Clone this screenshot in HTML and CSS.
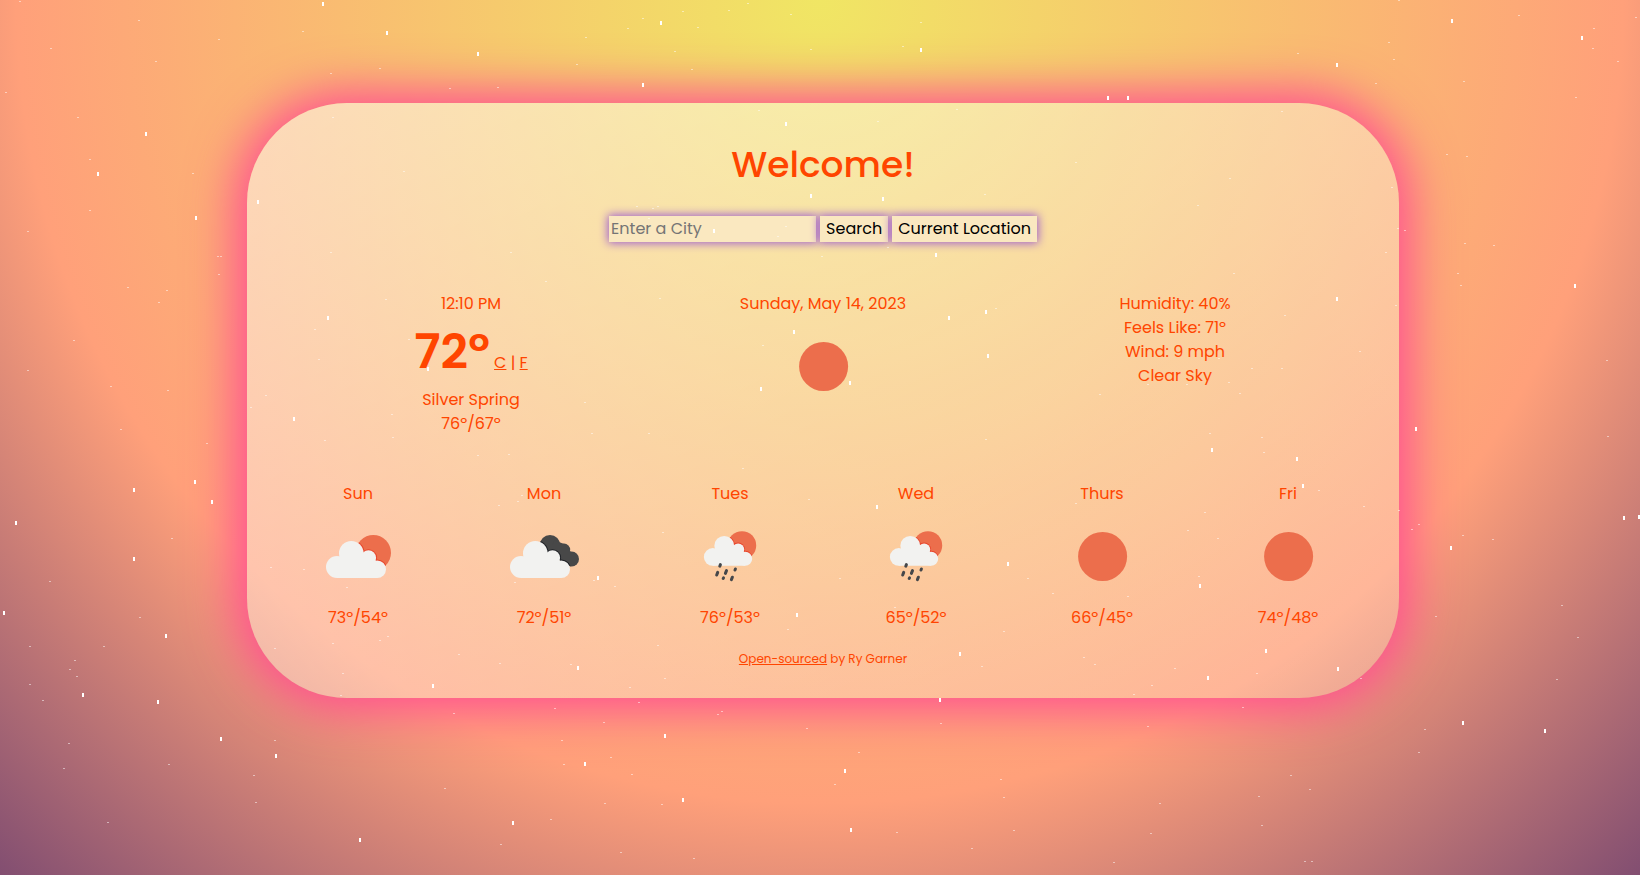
FILE: index.html
```
<!DOCTYPE html>
<html lang="en">
<head>
<meta charset="utf-8">
<meta name="viewport" content="width=device-width, initial-scale=1">
<title>Weather</title>
<link rel="stylesheet" href="styles.css">
</head>
<body>
<svg class="defs" aria-hidden="true">
  <defs>
    <g id="cloud">
      <circle cx="29" cy="61" r="11"/>
      <circle cx="43.3" cy="47.2" r="12.3"/>
      <circle cx="60.5" cy="51.8" r="7.6"/>
      <circle cx="69.2" cy="63.3" r="8.8"/>
      <path d="M29 72H69.2V56L60 48L44 46L29 52z"/>
    </g>
    <clipPath id="clip-sun"><circle cx="65.3" cy="46.7" r="17.7"/></clipPath>
    <g id="dark-shape">
      <circle cx="56" cy="39.3" r="10.3"/>
      <circle cx="70" cy="43.8" r="6.2"/>
      <circle cx="77.6" cy="53" r="7.4"/>
      <path d="M56 49L77 60.4L77 46L70 38L60 34z"/>
    </g>
    <clipPath id="clip-dark">
      <circle cx="56" cy="39.3" r="10.3"/>
      <circle cx="70" cy="43.8" r="6.2"/>
      <circle cx="77.6" cy="53" r="7.4"/>
      <path d="M56 49L77 60.4L77 46L70 38L60 34z"/>
    </clipPath>
    <symbol id="clear" viewBox="0 0 100 100">
      <circle class="sun" cx="50.6" cy="50.5" r="24.5"/>
    </symbol>
    <symbol id="few" viewBox="0 0 100 100">
      <circle class="sun" cx="65.3" cy="46.7" r="17.7"/>
      <use class="edge" href="#cloud" clip-path="url(#clip-sun)"/>
      <use class="white" href="#cloud"/>
    </symbol>
    <symbol id="broken" viewBox="0 0 100 100">
      <use class="dark" href="#dark-shape"/>
      <g clip-path="url(#clip-dark)"><use class="edge-dark" href="#cloud" x="-2"/></g>
      <use class="white" href="#cloud" x="-2"/>
    </symbol>
    <symbol id="rain" viewBox="0 0 100 100">
      <g transform="translate(9.4 1.8) scale(.805)">
        <circle class="sun" cx="65.3" cy="46.7" r="17.7"/>
        <use class="edge" href="#cloud" clip-path="url(#clip-sun)"/>
        <use class="white" href="#cloud"/>
      </g>
      <path class="drops" d="M39.8 60.2l.6-1.6M36.7 69l1-2.6M45.4 67.4l1.1-2.8M55 64l.4-1M43.2 72.4l.3-.5M51.4 73.6l1-2.4"/>
    </symbol>
  </defs>
</svg>

<main class="card">
  <h1 class="title">Welcome!</h1>
  <form class="search">
    <input class="field" type="text" placeholder="Enter a City" aria-label="City">
    <button class="button" type="button">Search</button>
    <button class="button" type="button">Current Location</button>
  </form>

  <section class="current">
    <div class="column">
      <div>12:10 PM</div>
      <div class="reading"><strong class="degrees">72º</strong> <a href="#c">C</a> | <a href="#f">F</a></div>
      <div>Silver Spring</div>
      <div>76º/67º</div>
    </div>
    <div class="column">
      <div>Sunday, May 14, 2023</div>
      <svg class="icon" role="img" aria-label="Clear"><use href="#clear"/></svg>
    </div>
    <div class="column">
      <div>Humidity: 40%</div>
      <div>Feels Like: 71º</div>
      <div>Wind: 9 mph</div>
      <div>Clear Sky</div>
    </div>
  </section>

  <section class="forecast">
    <div class="column"><div>Sun</div><svg class="icon" role="img" aria-label="Few clouds"><use href="#few"/></svg><div>73º/54º</div></div>
    <div class="column"><div>Mon</div><svg class="icon" role="img" aria-label="Cloudy"><use href="#broken"/></svg><div>72º/51º</div></div>
    <div class="column"><div>Tues</div><svg class="icon" role="img" aria-label="Rain"><use href="#rain"/></svg><div>76º/53º</div></div>
    <div class="column"><div>Wed</div><svg class="icon" role="img" aria-label="Rain"><use href="#rain"/></svg><div>65º/52º</div></div>
    <div class="column"><div>Thurs</div><svg class="icon" role="img" aria-label="Clear"><use href="#clear"/></svg><div>66º/45º</div></div>
    <div class="column"><div>Fri</div><svg class="icon" role="img" aria-label="Clear"><use href="#clear"/></svg><div>74º/48º</div></div>
  </section>

  <footer class="credit"><a href="#source">Open-sourced</a> by Ry Garner</footer>
</main>

<svg class="stars" aria-hidden="true">
  <path class="stars-near" d="M323 2v4M387 31v4M661 21v4M478 52v4M643 83v4M146 132v4M98 172v4M196 216v4M258 200v4M786 122v4M811 194v4M714 229v4M328 316v4M428 367v4M294 417v4M794 330v4M761 387v4M921 48v4M1452 19v4M1582 36v4M1337 63v4M1108 96v4M1128 96v4M883 197v4M936 253v4M949 316v4M986 310v4M1337 297v4M988 354v4M850 381v4M1575 284v4M1416 427v4M134 488v4M195 480v4M212 500v4M16 521v4M134 557v4M4 611v4M166 634v4M83 693v4M158 700v4M221 737v4M276 754v4M433 684v4M578 666v4M598 576v4M797 613v4M665 734v4M585 762v4M683 798v4M513 821v4M360 838v4M1212 448v4M1297 457v4M1303 484v4M877 505v4M1008 562v4M1200 584v4M1266 649v4M960 652v4M1338 667v4M1208 676v4M940 698v4M1451 546v4M1624 516v4M1639 515v4M1463 721v4M1545 729v4M845 769v4M851 828v4"/>
  <path class="stars-far" transform="translate(-1 .5)" d="M20 1h2M139 20h2M51 48h2M219 39h2M156 61h2M303 31h2M331 73h2M380 68h2M6 92h2M78 117h2M333 117h2M450 88h2M498 87h2M577 64h2M586 37h2M628 28h2M643 18h2M683 11h2M729 10h2M748 3h2M698 27h2M791 14h2M675 51h2M811 49h2M692 69h2M759 110h2M90 159h2M193 173h2M90 210h2M28 231h2M218 256h2M221 256h2M219 274h2M128 287h2M167 290h2M159 302h2M404 171h2M637 206h2M653 208h2M658 206h2M649 218h2M786 226h2M778 236h2M331 252h2M511 252h2M546 281h2M386 299h2M660 298h2M315 329h2M409 339h2M319 359h2M74 340h2M28 370h2M111 386h2M168 390h2M266 395h2M251 407h2M121 429h2M392 414h2M393 437h2M585 402h2M592 433h2M649 433h2M763 345h2M921 22h2M903 46h2M1399 0h2M1389 42h2M1394 59h2M1376 83h2M1298 53h2M1519 15h2M1636 17h2M1594 28h2M1593 48h2M1618 61h2M1464 81h2M1576 97h2M957 109h2M878 121h2M1282 111h2M1076 162h2M1230 178h2M1198 205h2M985 194h2M1392 187h2M1447 154h2M1467 156h2M1398 228h2M1405 230h2M1386 252h2M1465 243h2M1494 245h2M1458 273h2M1461 285h2M1234 273h2M888 247h2M822 256h2M996 308h2M1285 315h2M1396 305h2M1360 351h2M1252 368h2M1282 368h2M1219 358h2M1148 384h2M1187 384h2M1229 382h2M1240 393h2M1100 394h2M1210 433h2M1262 437h2M1607 360h2M1608 436h2M207 443h2M325 440h2M478 455h2M509 454h2M743 468h2M522 495h2M518 501h2M499 505h2M809 499h2M172 538h2M663 532h2M271 567h2M304 569h2M347 587h2M515 582h2M594 580h2M615 586h2M50 581h2M140 617h2M30 646h2M104 646h2M75 660h2M70 669h2M77 676h2M30 684h2M43 700h2M69 743h2M64 768h2M108 822h2M275 648h2M333 643h2M380 640h2M388 636h2M343 673h2M341 695h2M459 654h2M500 663h2M571 664h2M658 645h2M788 629h2M630 687h2M665 678h2M639 702h2M555 708h2M454 713h2M722 711h2M718 714h2M604 722h2M807 728h2M562 740h2M275 740h2M169 764h2M254 775h2M256 802h2M611 757h2M564 764h2M632 774h2M445 788h2M605 803h2M662 804h2M551 819h2M501 844h2M621 852h2M694 858h2M986 439h2M1264 452h2M1319 490h2M1364 506h2M1399 510h2M1076 503h2M1205 512h2M1188 530h2M1218 538h2M840 578h2M1028 578h2M1199 576h2M1053 593h2M1128 596h2M895 607h2M1004 631h2M1084 657h2M1095 664h2M1175 668h2M982 666h2M1257 673h2M1152 685h2M1134 694h2M1361 678h2M1243 707h2M1148 726h2M941 723h2M1419 524h2M1412 529h2M1463 535h2M1493 539h2M1436 616h2M1562 605h2M1578 637h2M1557 679h2M1425 729h2M1419 752h2M1291 775h2M1310 789h2M1259 796h2M1262 825h2M859 752h2M835 784h2M1001 779h2M1004 797h2M1160 803h2M897 832h2M1014 830h2M1151 833h2M972 848h2M1114 862h2M1305 861h2M1312 861h2"/>
</svg>
</body>
</html>
```

FILE: styles.css
```
* { box-sizing: border-box; }

body {
  margin: 0;
  min-height: 100vh;
  padding: 103px 241px 103px 247px;
  background: radial-gradient(circle at top, #f0e664, #ffa07a 67%, #824e71 100%) no-repeat;
  color: #ff4500;
  font: 400 16px/24px Poppins, Inter, sans-serif;
}

a { color: inherit; }

.defs { position: absolute; width: 0; height: 0; }

.card {
  padding: 40px 48px 27px;
  border-radius: 100px;
  background: linear-gradient(to right bottom, rgba(255, 255, 255, 0.5), rgba(255, 255, 255, 0.2));
  box-shadow: 0 0 50px 10px #ff4893;
  text-align: center;
}

.title {
  margin: 0;
  font-size: 36px;
  font-weight: 500;
  line-height: 44px;
}

.search {
  display: flex;
  flex-wrap: wrap;
  justify-content: center;
  gap: 4px;
  margin-top: 29px;
}

.field,
.button {
  height: 26px;
  border: 0;
  border-radius: 0;
  background: #fae8c0;
  box-shadow: 0 0 10px 1px #9b59d0;
  color: #000;
  font: inherit;
}

.field { width: 207px; padding: 0 2px 2px; }
.field::placeholder { color: #757575; }
.button { padding: 0 6px; }

.current {
  display: grid;
  grid-template-columns: repeat(3, 1fr);
  margin-top: 50px;
}

.reading { height: 72px; padding-top: 12px; line-height: 48px; }
.degrees { font-size: 48px; font-weight: 600; }

.icon { display: block; width: 100px; height: 100px; margin: 0 auto; }

.forecast {
  display: grid;
  grid-template-columns: repeat(6, 1fr);
  margin: 46px -30px 0;
}

.credit { margin-top: 17px; font-size: 12px; }

.sun { fill: #ec6e4c; }
.white { fill: #f2f2f0; }
.dark { fill: #484848; }
.edge { fill: #e8462c; stroke: #e8462c; stroke-width: 2; }
.edge-dark { fill: #1f2126; stroke: #1f2126; stroke-width: 2; }
.drops { fill: none; stroke: #45474a; stroke-width: 3; stroke-linecap: round; }

.stars {
  position: absolute;
  inset: 0;
  width: 100%;
  height: 100%;
  pointer-events: none;
}

.stars-near { stroke: #fff; stroke-width: 2; }
.stars-far { stroke: #fff; stroke-width: 1; opacity: 0.5; }
```
